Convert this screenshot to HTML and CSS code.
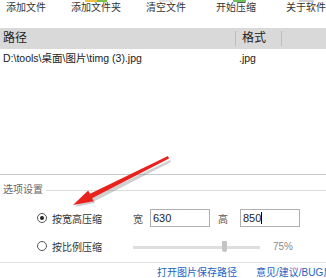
FILE: index.html
```html
<!DOCTYPE html>
<html lang="zh-CN">
<head>
  <meta charset="UTF-8" />
  <title>图片压缩</title>
  <link rel="stylesheet" href="styles.css">
</head>
<body>
  <div class="toolbar">
    <div class="tool first"><span class="peek"></span><span class="label">添加文件</span></div>
    <div class="tool"><span class="peek"><i class="p-yellow"></i><i class="p-green"></i></span><span class="label">添加文件夹</span></div>
    <div class="tool"><span class="peek"><i class="p-faint"></i></span><span class="label">清空文件</span></div>
    <div class="tool"><span class="peek"><i class="p-go"></i></span><span class="label">开始压缩</span></div>
    <div class="tool"><span class="peek"><i class="p-grey"></i></span><span class="label">关于软件</span></div>
  </div>

  <div class="list">
    <div class="list-head">
      <div class="col-path">路径</div>
      <div class="col-fmt">格式</div>
      <div class="col-rest"></div>
    </div>
    <div class="list-row">
      <div class="col-path">D:\tools\桌面\图片\timg (3).jpg</div>
      <div class="col-fmt">.jpg</div>
    </div>
  </div>

  <div class="options">
    <div class="legend"><span>选项设置</span></div>
    <div class="opt-row">
      <span class="radio checked"></span>
      <span class="opt-label">按宽高压缩</span>
      <span class="dim">宽</span>
      <span class="field">630</span>
      <span class="dim h">高</span>
      <span class="field">850<span class="caret"></span></span>
    </div>
    <div class="opt-row">
      <span class="radio"></span>
      <span class="opt-label">按比例压缩</span>
      <span class="slider"><span class="thumb"></span></span>
      <span class="pct">75%</span>
    </div>
  </div>

  <div class="footer">
    <a class="link open">打开图片保存路径</a>
    <a class="link">意见/建议/BUG反馈</a>
  </div>

  <svg class="arrow" width="326" height="278" viewBox="0 0 326 278">
    <polygon points="170,160 171,162 93,202 91,198" fill="#777" opacity="0.35" />
    <polygon points="75,207 95,203 90,192" fill="#777" opacity="0.35" />
    <polygon points="168,156 169,158.5 91.5,198.5 89.5,194" fill="#e8231d" />
    <polygon points="73,205 93.6,201.3 88.2,190.6" fill="#e8231d" />
  </svg>
</body>
</html>
```

FILE: styles.css
```css
body {
  margin: 0;
  font-family: "Liberation Sans", "Noto Sans CJK SC", sans-serif;
  color: #222;
  background: #fff;
  width: 326px;
  height: 278px;
  overflow: hidden;
}
.toolbar {
  display: flex;
  height: 28px;
}
.tool {
  width: 70px;
  flex: none;
  display: flex;
  flex-direction: column;
  align-items: center;
}
.tool.first {
  margin-left: -9px;
}
.peek {
  height: 2px;
  display: flex;
  justify-content: center;
}
.peek i {
  display: block;
  height: 2px;
}
.p-yellow { width: 12px; background: #f0c040; }
.p-green { width: 10px; background: #7cc04a; }
.p-faint { width: 14px; background: #e4e4e4; }
.p-go { width: 13px; background: #6cc25a; margin-left: 6px; }
.p-grey { width: 15px; background: #d0d0d0; }
.label {
  font-size: 10px;
  line-height: 12px;
  color: #333;
}
.list {
  height: 146px;
  border-bottom: 1px solid #c8c8c8;
}
.list-head {
  display: flex;
  height: 21px;
  background: #d9d9d9;
  font-size: 12px;
  line-height: 21px;
}
.col-path {
  width: 232px;
  padding-left: 3px;
}
.col-fmt {
  width: 45px;
  padding-left: 4px;
}
.list-head .col-fmt,
.list-head .col-rest {
  border-left: 1px solid #bdbdbd;
  margin: 3px 0;
  line-height: 15px;
  padding-left: 6px;
}
.list-head .col-fmt {
  width: 39px;
}
.list-row {
  display: flex;
  font-size: 10.5px;
  line-height: 17px;
  margin-top: 1px;
  color: #1a1a1a;
}
.options {
  padding-top: 9px;
}
.legend {
  display: flex;
  align-items: center;
  font-size: 10px;
  line-height: 12px;
  color: #666;
  padding-left: 3px;
}
.legend::after {
  content: "";
  flex: 1;
  height: 1px;
  background: #dcdcdc;
  margin-left: 3px;
}
.opt-row {
  display: flex;
  align-items: center;
  height: 20px;
  padding-left: 37px;
  margin-top: 12px;
  font-size: 10px;
}
.opt-row + .opt-row {
  margin-top: 8px;
}
.radio {
  width: 8px;
  height: 8px;
  border: 1px solid #555;
  border-radius: 50%;
  display: flex;
  align-items: center;
  justify-content: center;
}
.radio.checked::after {
  content: "";
  width: 4px;
  height: 4px;
  border-radius: 50%;
  background: #222;
}
.opt-label {
  width: 81px;
  margin-left: 5px;
  color: #333;
}
.dim {
  width: 10px;
  margin-right: 7px;
  color: #555;
}
.dim.h {
  margin-left: 8px;
  margin-right: 12px;
}
.field {
  width: 56px;
  height: 16px;
  border: 1px solid #b0b0b0;
  padding-left: 2px;
  font-size: 11px;
  line-height: 16px;
  color: #222;
  display: flex;
  align-items: center;
}
.caret {
  width: 1px;
  height: 12px;
  background: #000;
}
.slider {
  position: relative;
  width: 127px;
  height: 3px;
  background: #dedede;
  margin-top: 2px;
}
.thumb {
  position: absolute;
  left: 89px;
  top: -5px;
  width: 5px;
  height: 11px;
  background: #c4c4c4;
  border-radius: 1px 1px 3px 3px;
}
.pct {
  margin-left: 13px;
  color: #888;
}
.footer {
  margin-top: 6px;
  border-top: 1px solid #e2e2e2;
  padding-top: 4px;
  font-size: 10px;
  line-height: 12px;
  display: flex;
  padding-left: 157px;
}
.link {
  color: #1f5fbf;
  white-space: nowrap;
}
.link.open {
  margin-right: 19px;
}
.arrow {
  position: absolute;
  left: 0;
  top: 0;
  pointer-events: none;
}
```
